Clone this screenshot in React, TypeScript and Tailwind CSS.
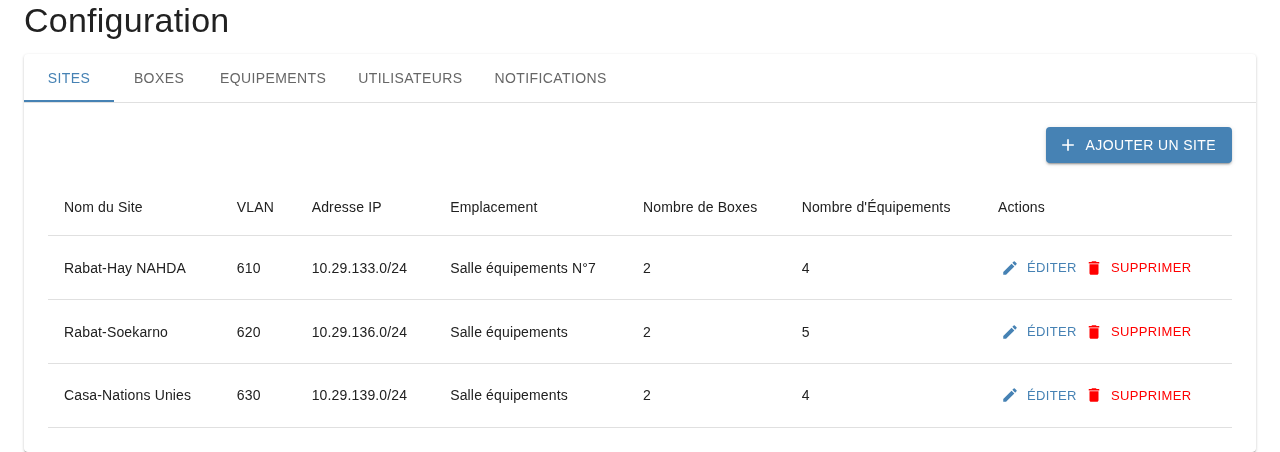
import { MdAdd, MdDelete, MdEdit } from 'react-icons/md';

const tabs = [
  { label: 'Sites', width: 'w-[90px]' },
  { label: 'Boxes', width: 'w-[90px]' },
  { label: 'Equipements', width: '' },
  { label: 'Utilisateurs', width: '' },
  { label: 'Notifications', width: '' },
];

const columns = ['Nom du Site', 'VLAN', 'Adresse IP', 'Emplacement', 'Nombre de Boxes', "Nombre d'Équipements", 'Actions'];

const sites = [
  ['Rabat-Hay NAHDA', '610', '10.29.133.0/24', 'Salle équipements N°7', '2', '4'],
  ['Rabat-Soekarno', '620', '10.29.136.0/24', 'Salle équipements', '2', '5'],
  ['Casa-Nations Unies', '630', '10.29.139.0/24', 'Salle équipements', '2', '4'],
];

const grid = 'grid grid-cols-[172.8px_74.9px_138.5px_192.8px_158.7px_196.3px_1fr] border-b border-[#e0e0e0] items-center';

export default function App() {
  return (
    <div className="h-[452px] overflow-hidden px-6 font-['Liberation_Sans',Arial,sans-serif] text-[#212121] will-change-transform">
      <h1 className="h-[54px] text-[34px] leading-[40px] tracking-[0.25px]">Configuration</h1>
      <main className="h-[398px] rounded shadow-[0_2px_1px_-1px_rgba(0,0,0,0.2),0_1px_1px_0_rgba(0,0,0,0.14),0_1px_3px_0_rgba(0,0,0,0.2)]">
        <nav className="flex h-[49px] border-b border-[#e0e0e0]">
          {tabs.map((tab, i) => (
            <button
              key={tab.label}
              className={`flex h-12 items-center justify-center px-4 text-[14px] leading-[17.5px] tracking-[0.4px] uppercase ${tab.width} ${i === 0 ? 'border-b-2 border-[#4682b4] pt-1 text-[#4682b4]' : 'pt-0.5 text-[#666666]'}`}
            >
              {tab.label}
            </button>
          ))}
        </nav>
        <section className="p-6">
          <div className="mb-4 flex justify-end">
            <button className="flex h-9 items-center rounded bg-[#4682b4] pr-4 pl-3 text-[14px] tracking-[0.4px] text-white uppercase shadow-[0_3px_1px_-2px_rgba(0,0,0,0.2),0_2px_2px_0_rgba(0,0,0,0.14),0_1px_5px_0_rgba(0,0,0,0.12)]">
              <MdAdd className="mr-2 size-5" />
              Ajouter un site
            </button>
          </div>
          <div className="text-[14px] leading-6 tracking-[0.15px]">
            <div className={`${grid} h-[57px]`}>
              {columns.map((c) => (
                <div key={c} className="pl-4 whitespace-nowrap">{c}</div>
              ))}
            </div>
            {sites.map((site) => (
              <div key={site[0]} className={`${grid} group h-16`}>
                {site.map((value, i) => (
                  <div key={i} className="pl-4 whitespace-nowrap group-last:pb-0.5">{value}</div>
                ))}
                <div className="flex pl-4 text-[13px] tracking-[0.371px]">
                  <button className="flex items-center pl-[3px] text-[#4682b4] uppercase">
                    <MdEdit className="mr-2 size-[18px] group-last:-translate-y-px" />
                    Éditer
                  </button>
                  <button className="ml-2 flex items-center text-[#ff0000] uppercase">
                    <MdDelete className="mr-2 size-[18px] group-last:-translate-y-px" />
                    Supprimer
                  </button>
                </div>
              </div>
            ))}
          </div>
        </section>
      </main>
    </div>
  );
}
